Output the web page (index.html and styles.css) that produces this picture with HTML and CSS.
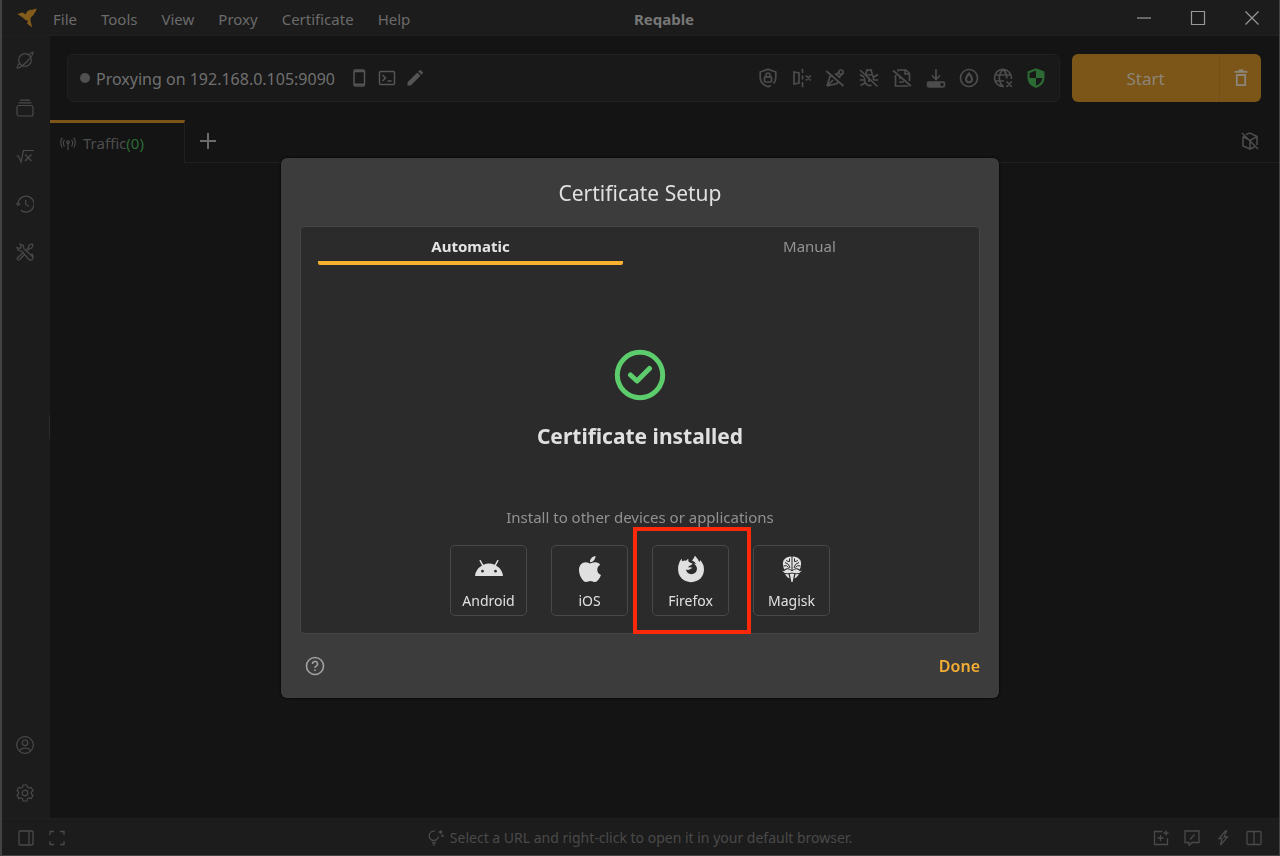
FILE: index.html
```html
<!DOCTYPE html>
<html lang="en">
<head>
<meta charset="utf-8">
<title>Reqable</title>
<link rel="stylesheet" href="styles.css">
</head>
<body>
<div class="window">
  <header class="titlebar">
    <svg class="logo" viewBox="0 0 20 20" fill="currentColor"><path d="M.3 6 3.800 5Q5.500 3.800 7 5.200L8.500 6.600Q9.500 3 14 1.200L13.500 2.500Q16.500 1 19.600 .6Q19.500 3 17.500 5Q17 7.500 14 9.300Q13 11 13.600 13L15.200 19.500 12.500 17.500 10 15.600 11 12.700Q7.500 12 5.600 9.500 4.800 6.700Z"/></svg>
    <nav class="menu">
      <button>File</button><button>Tools</button><button>View</button><button>Proxy</button><button>Certificate</button><button>Help</button>
    </nav>
    <h1 class="app-name">Reqable</h1>
    <div class="window-controls">
      <button aria-label="Minimize"><svg viewBox="0 0 16 16"><path d="M1 8H15"/></svg></button>
      <button aria-label="Maximize"><svg viewBox="0 0 16 16"><path d="M1.500 1.500H14.500V14.500H1.500Z"/></svg></button>
      <button aria-label="Close"><svg viewBox="0 0 16 16"><path d="M1.500 1.500 14.500 14.500M14.500 1.500 1.500 14.500"/></svg></button>
    </div>
  </header>

  <div class="body">
    <aside class="sidebar">
      <button aria-label="Traffic"><svg viewBox="0 0 18 18"><circle cx="9" cy="9" r="6.300"/><path d="M13 3.700Q16 1 17 1.200Q17.600 3.500 11 10.500Q4 17.500 1.300 17Q.3 16 3.500 12.500"/></svg></button>
      <button aria-label="Collections"><svg viewBox="0 0 18 18"><rect x="1" y="6.500" width="16" height="10.500" rx="2"/><path d="M2.500 3.900H15.500M4 1.200H14"/></svg></button>
      <button aria-label="Scripts"><svg viewBox="0 0 18 18"><path d="M.5 9H2.500L5 15 7.500 3.500H17.800M9 7.500 15.500 14M15.500 7.500 9 14"/></svg></button>
      <button aria-label="History"><svg viewBox="0 0 18 18"><path d="M2 9A8 8 0 1 1 4.800 15.200M.3 8.500 2 10.300 4.200 8.500M9.700 5V9.500L12.800 11.200"/></svg></button>
      <button aria-label="Tools"><svg viewBox="0 0 18 18"><path d="M4.200 1 7.300 2.500 8 6 15.500 12.500Q18 15 16 16.700Q14.200 18 12 15.500L6 8.200 2.300 7.300 1 4.500 3.800 5.500 5.200 4ZM10.300 6.700 12.500 4.400 13 2.300 16 1 17 2 15.700 5 13.400 5.700 11.400 7.800M6.800 10 2 14.300Q.5 15.500 1.600 16.600Q2.800 17.800 4 16L8.500 11.700M15.500 10.800Q17.500 11.800 17 14.500M12.200 15.600Q14 18 16.500 16.500"/></svg></button>
      <span class="spacer"></span>
      <button aria-label="Account"><svg viewBox="0 0 18 18"><circle cx="9" cy="9" r="8.300"/><circle cx="9" cy="6.800" r="2.800"/><path d="M3.300 14.800Q5 12 9 12T14.700 14.800"/></svg></button>
      <button aria-label="Settings"><svg viewBox="0 0 18 18"><path d="M7.200 1H10.800L11.400 3.200 13 4.100 15.200 3.500 17 6.600 15.400 8.100V9.900L17 11.400 15.200 14.500 13 13.900 11.400 14.800 10.800 17H7.200L6.600 14.800 5 13.900 2.800 14.500 1 11.400 2.600 9.900V8.100L1 6.600 2.800 3.500 5 4.100 6.600 3.200Z"/><circle cx="9" cy="9" r="2.800"/></svg></button>
    </aside>

    <main class="main">
      <div class="toolbar">
        <div class="proxy-bar">
          <span class="dot"></span>
          <span class="address">Proxying on 192.168.0.105:9090</span>
          <div class="address-tools">
            <button aria-label="Devices"><svg viewBox="0 0 18 18"><rect x="4" y="1" width="10.500" height="16" rx="1.500"/><path d="M4 2.400H14.500M4 15.300H14.500" stroke-width="1.800"/></svg></button>
            <button aria-label="Terminal"><svg viewBox="0 0 18 18"><rect x="1.500" y="2.500" width="15" height="13" rx="1"/><path d="M4.500 6 7.500 9 4.500 12M9.500 12H13.500"/></svg></button>
            <button aria-label="Edit"><svg class="solid" viewBox="0 0 18 18"><path d="M1.500 13.300 11.300 3.500 14.500 6.700 4.700 16.500H1.500ZM12.200 2.600 13.500 1.300Q14.100.8 14.700 1.300L16.700 3.300Q17.200 3.900 16.700 4.500L15.400 5.800Z"/></svg></button>
          </div>
          <div class="quick-tools">
            <button aria-label="SSL proxying"><svg viewBox="0 0 20 20"><path d="M15.500 15.500Q17.800 13.500 17.800 9.500V4L10 1.200 2.200 4V9.500Q2.200 16.300 10 18.800L13 17.500"/><rect x="6.500" y="8.800" width="7" height="5.200" rx="1"/><path d="M8 8.500V7A2 2 0 0 1 12 7V8.500"/></svg></button>
            <button aria-label="Mirror"><svg viewBox="0 0 20 20"><path d="M2 4 7 5V15L2 16ZM10.500 .8V5M10.500 7.500V11.500M10.500 14V19.200M13.800 7.500 18.800 12.500M18.800 7.500 13.800 12.500"/></svg></button>
            <button aria-label="Rewrite"><svg viewBox="0 0 20 20"><path d="M1.300 3 18.500 18M2 18 5 8.500 8 7.500M2 18 12 15.500 13 12M2 18 8 12M10 5.500 12.500 7.500 15 10M11.500 6.500 14 3.800M14.500 9 16.800 6"/><circle cx="16" cy="4.200" r="2.200"/></svg></button>
            <button aria-label="Breakpoint"><svg viewBox="0 0 20 20"><path d="M1 2 18.500 18.500M7 7H13.500Q14.800 9 14.500 12M12.500 17Q10.500 18.300 8.500 17Q5 15 5.500 9.500M7 6Q7 2 10 2T13 6M7.500 1 8.500 2.500M12.500 1 11.500 2.500M1 6.500 5 9M19 6.500 15 9M.8 12H5.500M14.500 12H19.200M1.500 17.500 5.800 15M10 9V14"/></svg></button>
            <button aria-label="Script"><svg viewBox="0 0 20 20"><path d="M1 2.500 19 18M6 3.500V2H14L17.500 5.500V13M3.500 7V18H16.500M7 10H9M7 14H12"/><path d="M13 2V6H17"/></svg></button>
            <button aria-label="Download"><svg viewBox="0 0 20 20"><path d="M10 1V11M6 7.500 10 11.500 14 7.500"/><rect class="fill" x="1.500" y="14.200" width="17" height="4.600" rx="1.500"/><circle cx="16" cy="16.500" r=".8" stroke="#191919"/></svg></button>
            <button aria-label="Throttle"><svg viewBox="0 0 20 20"><circle cx="10" cy="10" r="8.500"/><path d="M10 5.500Q13 9 13 11.200A3 3 0 0 1 7 11.200Q7 9 10 5.500Z" stroke-width="2"/></svg></button>
            <button aria-label="Network"><svg viewBox="0 0 20 20"><path d="M11 18.400A8.500 8.500 0 1 1 18.400 11M1.800 7H18.200M1.800 13H11M10 1.500Q5.500 6 6.500 12Q7 16 10 18.500M10 1.500Q13.800 5 13.800 10.500M13.500 13.500 18.800 18.800M18.800 13.500 13.500 18.800"/></svg></button>
            <button class="secure" aria-label="Certificate status"><svg viewBox="0 0 20 20"><path class="fill" stroke="none" d="M10 .3 18.500 3.500V9.500Q18.500 17 10 20Q1.500 17 1.500 9.500V3.500Z"/><path fill="#191919" stroke="none" d="M10 10H16.500Q15.500 15.500 10 17.800ZM10 2.500V10H3.500V5Z"/></svg></button>
          </div>
        </div>
        <div class="start-group">
          <button class="start">Start</button>
          <button class="clear" aria-label="Clear"><svg viewBox="0 0 18 18"><path d="M2.500 2.800H15.500M6.500 1.500H11.500M4.800 6V16.200H13.200V6Z"/></svg></button>
        </div>
      </div>

      <div class="tab-strip">
        <button class="traffic-tab"><svg viewBox="0 0 18 18"><path d="M9 8V17M5 13Q2.500 9 5 5.500M13 13Q15.500 9 13 5.500M2.500 14Q-.8 8 2.500 3M15.500 14Q18.800 8 15.500 3"/><circle cx="9" cy="8" r="1.500"/></svg><span>Traffic<span class="count">(0)</span></span></button>
        <button class="new-tab" aria-label="New tab"><svg viewBox="0 0 18 18"><path d="M9 1V17M1 9H17"/></svg></button>
        <button class="view-toggle" aria-label="Toggle view"><svg viewBox="0 0 18 18"><path d="M1 1 17 17M2 4.500V14L9 17V8.500M2 4.500 9 8.500 11 7.300M5 2.500 9 1 16 4.500V13M9 17 13.500 15M11 7.300 16 4.500"/></svg></button>
      </div>
      <div class="workspace"><span class="grip"></span></div>
    </main>
  </div>

  <footer class="statusbar">
    <div class="status-group left">
      <button aria-label="Toggle sidebar"><svg viewBox="0 0 16 16"><rect x="1" y="1" width="14" height="14" rx="1"/><path d="M11 1V15"/></svg></button>
      <button aria-label="Full screen"><svg viewBox="0 0 16 16"><path d="M1 5V1.500H5M11 1.500H15V5M15 11V14.500H11M5 14.500H1V11"/></svg></button>
    </div>
    <p class="hint"><svg viewBox="0 0 16 16"><path d="M10.500 6.500A4.700 4.700 0 1 1 7 1.200M3.500 10.500H8.300M4 13H7.800M5 15.200H6.800M12.500 0V4M10.500 2H14.500M14.500 4.500V7M13.200 5.800H15.800"/></svg>Select a URL and right-click to open it in your default browser.</p>
    <div class="status-group right">
      <button aria-label="New"><svg viewBox="0 0 16 16"><path d="M9.500 1.500H1.500V14.500H14.500V8M7.500 5V11M4.500 8H10.500M13 .5V5.500M10.500 3H15.500"/></svg></button>
      <button aria-label="Feedback"><svg viewBox="0 0 16 16"><path d="M1 1H15V12.500H8L5 15.500V12.500H1ZM6 9.500 10.500 4.500"/></svg></button>
      <button aria-label="Quick actions"><svg viewBox="0 0 16 16"><path d="M10.500 1 4 8.500H7L5.500 15 12.500 7H9L11.500 1Z"/></svg></button>
      <button aria-label="Split view"><svg viewBox="0 0 16 16"><rect x="1" y="1.500" width="14" height="13" rx="1"/><path d="M8 1.500V14.500"/></svg></button>
    </div>
  </footer>
</div>

<div class="overlay">
  <section class="dialog" role="dialog" aria-labelledby="dialog-title">
    <h2 id="dialog-title" class="dialog-title">Certificate Setup</h2>
    <div class="panel">
      <div class="panel-tabs" role="tablist">
        <button class="active" role="tab" aria-selected="true">Automatic</button>
        <button role="tab" aria-selected="false">Manual</button>
      </div>
      <div class="result">
        <svg class="success" viewBox="0 0 52 52"><circle cx="26" cy="26" r="22.700"/><path d="M16.500 26 23 32 35.500 19.500"/></svg>
        <h3>Certificate installed</h3>
      </div>
      <p class="other">Install to other devices or applications</p>
      <div class="targets">
        <button class="target"><svg viewBox="0 0 28 28"><path d="M0 21Q.5 14.300 7 10.400L4.300 5.500 5.500 4.800 8.300 9.700Q14 7.300 19.700 9.700L22.500 4.800 23.700 5.500 21 10.400Q27.500 14.300 28 21ZM7.500 14.800A1.400 1.400 0 1 0 7.500 17.600A1.400 1.400 0 1 0 7.500 14.800ZM20.500 14.800A1.400 1.400 0 1 0 20.500 17.600A1.400 1.400 0 1 0 20.500 14.800Z"/></svg>Android</button>
        <button class="target"><svg viewBox="-42 16 470 480"><path d="M318.700 268.700c-.2-36.700 16.400-64.400 50-84.800-18.800-26.900-47.200-41.700-84.700-44.600-35.500-2.800-74.300 20.700-88.500 20.700-15 0-49.400-19.700-76.400-19.700C63.300 141.200 4 184.800 4 273.500q0 39.300 14.400 81.200c12.800 36.700 59 126.700 107.200 125.200 25.200-.6 43-17.900 75.800-17.900 31.800 0 48.300 17.900 76.400 17.900 48.600-.7 90.400-82.500 102.600-119.300-65.200-30.700-61.700-90-61.700-91.900zm-56.600-164.200c27.300-32.400 24.800-61.900 24-72.500-24.100 1.400-52 16.400-67.900 34.900-17.500 19.800-27.800 44.300-25.600 71.900 26.100 2 49.900-11.400 69.500-34.300z"/></svg>iOS</button>
        <button class="target highlighted"><svg viewBox="0 0 28 28"><path d="M2.500 7Q3 5.500 4.800 3.500Q4.600 5.500 5.300 6.300Q7 5.300 9 5.700Q10 4.300 11.500 4Q11 5.500 11.500 6.600Q13 8.200 15.600 8.600Q15.500 9.800 13.200 10.600Q11.500 11 11.200 12.500Q13.700 11.600 15.600 13Q14 13.200 13 14.200Q11.500 15.500 9 14.500Q10 19 14.200 19.200Q19.500 18.800 20 14Q20 10.500 16.800 8.400Q18.300 8.400 19.200 9Q18 7 15 5.600Q16.500 4 18 .8Q21.500 4.500 22.300 7Q23.300 6.200 23.200 5Q27.300 9.600 27 15Q26 26.200 14 27.200Q2 26 1.100 15Q.8 10.500 2.500 7Z"/></svg>Firefox</button>
        <button class="target"><svg viewBox="0 0 28 28"><path d="M13.500 1.500V15L10.500 13.300Q8 13 6.200 14.500Q4 9 5.500 5.500Q8 1.500 13.500 1.500ZM14.500 1.500Q20 1.500 22.500 5.500Q24 9 21.800 14.500Q20 13 17.500 13.300L14.500 15ZM4 15.500 6 16.200Q9.500 12.500 14 16.300Q18.500 12.500 22 16.200L24 15.500Q22 18.500 18.500 18.300Q15.500 18.200 14 17.600Q12.500 18.200 9.500 18.300Q6 18.500 4 15.500ZM7 19 10.500 19.300 11.500 23.500Q8.500 22 7 19ZM21 19 17.500 19.300 16.500 23.500Q19.500 22 21 19ZM11.800 19 14 18.600 16.200 19 14.600 27H13.400Z"/><path class="etch" d="M11.500 3.500V6.500Q9 7 8.300 5M7 7.500Q11.500 8.500 12 13M5.500 11Q9 9.500 10.500 12.500M16.500 3.500V6.500Q19 7 19.700 5M21 7.500Q16.500 8.500 16 13M22.500 11Q19 9.500 17.500 12.500"/></svg>Magisk</button>
      </div>
    </div>
    <div class="dialog-actions">
      <button class="help" aria-label="Help"><svg viewBox="0 0 20 20"><circle cx="10" cy="10" r="8.500"/><path d="M7.500 8A2.500 2.500 0 1 1 11.200 10.100Q10 10.700 10 12M10 13.500V15"/></svg></button>
      <button class="done">Done</button>
    </div>
  </section>
</div>
</body>
</html>
```
FILE: styles.css
```css
* { box-sizing: border-box; }
html, body { height: 100%; }
body {
  margin: 0;
  background: #141414;
  color: #6b6b6b;
  font: 15px/20px "Noto Sans", "Open Sans", sans-serif;
}
h1, h2, h3, p { margin: 0; }
button {
  margin: 0;
  padding: 0;
  border: 0;
  background: none;
  color: inherit;
  font: inherit;
}
svg {
  display: block;
  flex: none;
  fill: none;
  stroke: currentColor;
  stroke-width: 1.5;
}
.solid, .fill { fill: currentColor; }
.solid { stroke: none; }

.window {
  display: flex;
  flex-direction: column;
  height: 100vh;
  border: solid #434343;
  border-width: 0 1px 1px 2px;
}

/* Title bar */
.titlebar {
  display: grid;
  grid-template-columns: 1fr auto 1fr;
  align-items: center;
  flex: none;
  height: 36px;
  padding: 0 19px 0 15px;
  background: #1c1c1c;
  border-bottom: 1px solid #202020;
}
.logo {
  grid-area: 1 / 1;
  width: 20px;
  height: 20px;
  color: #835b1b;
  fill: currentColor;
  stroke: none;
}
.menu {
  grid-area: 1 / 1;
  display: flex;
  gap: 24px;
  padding: 2px 0 0 36px;
}
.app-name {
  grid-area: 1 / 2;
  padding: 2px 0 0 51px;
  font-size: 15px;
  line-height: 20px;
  color: #777;
}
.window-controls {
  grid-area: 1 / 3;
  justify-self: end;
  display: flex;
  gap: 38px;
  color: #999;
}
.window-controls svg { width: 16px; height: 16px; stroke-width: 1.2; }

.body { display: flex; flex: 1; min-height: 0; }

/* Sidebar */
.sidebar {
  display: flex;
  flex-direction: column;
  flex: none;
  width: 48px;
  padding-bottom: 1px;
  background: #1c1c1c;
  color: #4a4a4a;
}
.sidebar button {
  display: grid;
  place-items: center;
  height: 48px;
  padding-right: 2px;
}
.sidebar svg { width: 18px; height: 18px; stroke-width: 1.2; }
.spacer { flex: 1; }

/* Main area */
.main { display: flex; flex-direction: column; flex: 1; min-width: 0; }
.toolbar { display: flex; gap: 12px; padding: 18px 18px 18px 17px; }
.proxy-bar {
  display: flex;
  align-items: center;
  flex: 1;
  height: 48px;
  padding: 0 13px 0 12px;
  background: #191919;
  border: 1px solid #202020;
  border-radius: 6px;
}
.dot { width: 10px; height: 10px; margin-right: 6px; border-radius: 50%; background: #505050; }
.address { padding-top: 2px; font-size: 16px; line-height: 24px; color: #707070; }
.address-tools { display: flex; gap: 10px; margin-left: 15px; color: #555; }
.address-tools svg { width: 18px; height: 18px; }
.quick-tools {
  display: flex;
  justify-content: space-between;
  width: 288px;
  margin-left: auto;
  color: #4c4c4c;
}
.quick-tools svg { width: 20px; height: 20px; stroke-width: 1.7; }
.quick-tools .secure { color: #2d6b35; }
.start-group {
  display: flex;
  width: 189px;
  height: 48px;
  border-radius: 6px;
  background: #7c5518;
  color: #8c8579;
}
.start { flex: 1; padding-top: 2px; font-size: 17px; }
.clear { display: grid; place-items: center; width: 42px; border-left: 1px solid #705019; }
.clear svg { width: 18px; height: 18px; stroke-width: 1.8; }

.tab-strip { display: flex; height: 43px; border-bottom: 1px solid #202020; }
.traffic-tab {
  display: flex;
  align-items: center;
  gap: 7px;
  width: 135px;
  height: 43px;
  padding: 0 10px;
  border-top: 3px solid #7c5518;
  border-right: 1px solid #202020;
  background: #141414;
  color: #4d4d4d;
}
.traffic-tab svg { width: 16px; height: 16px; stroke-width: 1.2; }
.count { color: #2d6b35; }
.new-tab { display: grid; place-items: center; width: 46px; }
.new-tab svg { width: 18px; height: 18px; stroke-width: 2; }
.view-toggle { margin: 0 20px 0 auto; color: #4d4d4d; }
.view-toggle svg { width: 18px; height: 18px; }
.workspace { display: flex; align-items: center; flex: 1; padding-bottom: 127px; }
.grip { width: 1px; height: 24px; margin-left: -1px; background: #2b2b2b; }

/* Status bar */
.statusbar {
  display: grid;
  grid-template-columns: 1fr auto 1fr;
  align-items: center;
  flex: none;
  height: 37px;
  padding: 2px 17px 0 16px;
  background: #1c1c1c;
  border-top: 1px solid #202020;
  color: #4a4a4a;
}
.status-group { display: flex; gap: 15px; }
.right { justify-self: end; }
.statusbar svg { width: 16px; height: 16px; stroke-width: 1.3; }
.hint { display: flex; align-items: center; gap: 6px; font-size: 14px; }

/* Certificate dialog */
.overlay {
  position: fixed;
  inset: 0;
  display: grid;
  place-items: center;
  padding: 16px;
}
.dialog {
  width: 100%;
  max-width: 718px;
  padding: 19px 19px 20px;
  border-radius: 6px;
  background: #3c3c3c;
  box-shadow: 0 0 3px #000;
  color: #e0e0e0;
}
.dialog-title {
  margin-bottom: 17px;
  font-size: 21px;
  font-weight: 400;
  line-height: 32px;
  text-align: center;
}
.panel {
  padding-bottom: 17px;
  border: 1px solid #454545;
  border-radius: 4px;
  background: #2b2b2b;
}
.panel-tabs { display: grid; grid-template-columns: 1fr 1fr; color: #929292; }
.panel-tabs button { margin: 0 17px; padding: 9px 0 5px; border-bottom: 4px solid transparent; }
.panel-tabs .active { border-color: #fbb130; border-radius: 2px; color: #e4e4e4; font-weight: 700; }
.result {
  display: flex;
  flex-direction: column;
  align-items: center;
  gap: 19px;
  padding: 84px 0 55px;
}
.success { width: 52px; height: 52px; color: #5dcc6c; stroke-width: 5; stroke-linecap: round; stroke-linejoin: round; }
.result h3 { font-size: 21px; line-height: 32px; }
.other { color: #929292; text-align: center; }
.targets { display: flex; justify-content: center; gap: 24px; margin-top: 18px; }
.target {
  position: relative;
  display: flex;
  flex-direction: column;
  align-items: center;
  gap: 8px;
  width: 77px;
  height: 71px;
  padding: 9px 0 0;
  border: 1px solid #484848;
  border-radius: 5px;
  font-size: 14px;
  line-height: 20px;
}
.target svg { width: 28px; height: 28px; fill: currentColor; stroke: none; }
.target .etch { fill: none; stroke: #2b2b2b; stroke-width: 1; }
.highlighted::after {
  content: "";
  position: absolute;
  inset: -19px -23px -19px -20px;
  border: 4px solid #fc2a0b;
}
.dialog-actions { display: flex; justify-content: space-between; align-items: center; margin-top: 20px; }
.help { margin-left: 5px; color: #a0a0a0; }
.help svg { width: 20px; height: 20px; stroke-width: 1.6; }
.done { color: #f5ae33; font-size: 16px; font-weight: 600; line-height: 24px; }
```
